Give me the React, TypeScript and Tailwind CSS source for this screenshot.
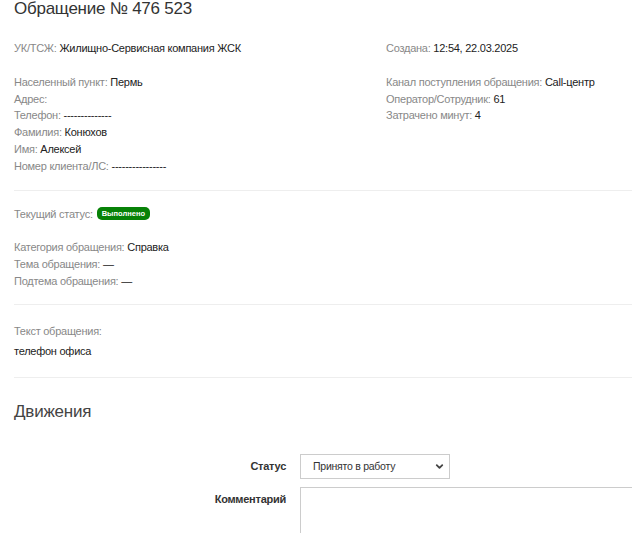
import { ChevronDown } from "lucide-react";

function Field({ label, value }: { label: string; value?: string }) {
  return (
    <div>
      <span className="text-[#888]">{label}:</span>
      {value ? <span className="text-[#222]"> {value}</span> : null}
    </div>
  );
}

export default function App() {
  return (
    <div
      className="min-h-screen overflow-hidden bg-white pl-[14px] text-[11px] leading-[16.8px] tracking-[-0.25px] text-[#333]"
      style={{ fontFamily: '"Liberation Sans", Arial, sans-serif' }}
    >
      <h1 className="text-[17px] leading-[18px] tracking-[-0.25px] text-[#333]">
        Обращение № 476 523
      </h1>

      <div className="mt-[22px] grid grid-cols-[372px_1fr]">
        <div>
          <Field label="УК/ТСЖ" value="Жилищно-Сервисная компания ЖСК" />
          <div className="mt-[17px]">
            <Field label="Населенный пункт" value="Пермь" />
            <Field label="Адрес" />
            <Field label="Телефон" value="--------------" />
            <Field label="Фамилия" value="Конюхов" />
            <Field label="Имя" value="Алексей" />
            <Field label="Номер клиента/ЛС" value="----------------" />
          </div>
        </div>
        <div>
          <Field label="Создана" value="12:54, 22.03.2025" />
          <div className="mt-[17px]">
            <Field label="Канал поступления обращения" value="Call-центр" />
            <Field label="Оператор/Сотрудник" value="61" />
            <Field label="Затрачено минут" value="4" />
          </div>
        </div>
      </div>

      <div className="mt-[15px] border-t border-[#eee]" />

      <div className="mt-[15px] flex items-center">
        <span className="text-[#888]">Текущий статус:</span>
        <span className="ml-[4px] rounded-[5px] bg-[#078207] px-[5px] text-[7.5px] font-bold leading-[13px] tracking-normal text-white">
          Выполнено
        </span>
      </div>

      <div className="mt-[17px]">
        <Field label="Категория обращения" value="Справка" />
        <Field label="Тема обращения" value="—" />
        <Field label="Подтема обращения" value="—" />
      </div>

      <div className="mt-[14px] border-t border-[#eee]" />

      <div className="mt-[18px] text-[#888]">Текст обращения:</div>
      <div className="mt-[3px] text-[#222]">телефон офиса</div>

      <div className="mt-[18px] border-t border-[#eee]" />

      <h2 className="mt-[24px] text-[17px] leading-[20px] tracking-[-0.2px] text-[#444]">
        Движения
      </h2>

      <div className="mt-[32px] grid grid-cols-[272px_1fr] gap-x-[14px] gap-y-[8px]">
        <div className="flex h-[25px] items-center justify-end font-bold text-[#333]">
          Статус
        </div>
        <div>
          <div className="flex h-[25px] w-[150px] items-center justify-between border border-[#ccc] bg-white pl-[12px] pr-[4px] text-[10.5px] text-[#333]">
            <span>Принято в работу</span>
            <ChevronDown size={11} strokeWidth={4} className="text-[#444]" />
          </div>
        </div>
        <div className="pt-[4px] text-right font-bold text-[#333]">Комментарий</div>
        <div className="h-[80px] w-[420px] border border-[#ccc] bg-white" />
      </div>
    </div>
  );
}
